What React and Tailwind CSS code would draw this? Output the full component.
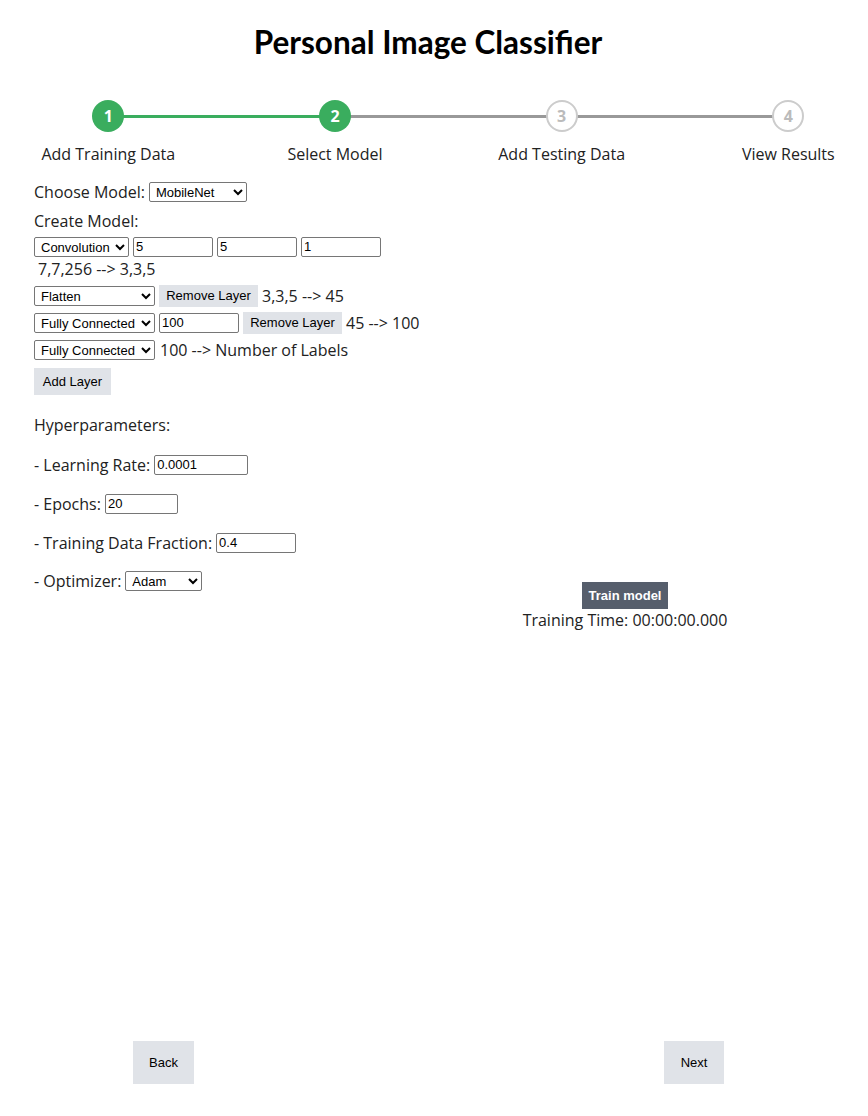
import React from "react";

const steps = [
  { n: 1, label: "Add Training Data", done: true },
  { n: 2, label: "Select Model", done: true },
  { n: 3, label: "Add Testing Data", done: false },
  { n: 4, label: "View Results", done: false },
];

const ctl = "border border-[#767676] rounded-[2px] bg-white text-[13px] text-black px-[2px]";
const body = { fontFamily: '"Open Sans", sans-serif' };
const arial = { fontFamily: '"Liberation Sans", Arial, sans-serif' };

function Stepper() {
  return (
    <div className="flex ml-[-5px] w-[907px] mt-[37px]">
      {steps.map((s, i) => (
        <div key={s.n} className="relative w-[226.67px] flex flex-col items-center">
          {i < steps.length - 1 && (
            <div
              className={
                "absolute top-[14.5px] left-1/2 w-full h-[3px] " +
                (steps[i + 1].done ? "bg-[#3aad5e]" : "bg-[#999999]")
              }
            />
          )}
          {s.done ? (
            <div className="relative z-10 w-8 h-8 rounded-full bg-[#3aad5e] text-white font-bold text-[16px] flex items-center justify-center">
              {s.n}
            </div>
          ) : (
            <div className="relative z-10 w-8 h-8 rounded-full bg-white border-2 border-[#cccccc] text-[#bbbbbb] font-bold text-[16px] flex items-center justify-center">
              {s.n}
            </div>
          )}
          <div className="mt-[11px] text-[16px] text-[#222] whitespace-nowrap leading-[22px]">{s.label}</div>
        </div>
      ))}
    </div>
  );
}

function Sel({ w, value }) {
  return (
    <select className={ctl + " h-[20px] " + w} style={arial} defaultValue={value}>
      <option>{value}</option>
    </select>
  );
}

function Inp({ w, value }) {
  return <input className={ctl + " h-[20px] " + w} style={arial} defaultValue={value} />;
}

function GrayBtn({ children, cls }) {
  return (
    <button className={"bg-[#e0e3e8] text-[13px] text-black " + cls} style={arial}>
      {children}
    </button>
  );
}

export default function App() {
  return (
    <div className="min-h-[1116px] bg-white overflow-hidden text-[#222]" style={body}>
      {/* TITLE */}
      <h1
        className="pt-[21px] pr-[12px] text-center text-[31.5px] leading-[42px] font-bold text-black"
        style={{ fontFamily: "Lato, sans-serif" }}
      >
        Personal Image Classifier
      </h1>

      <Stepper />

      <div className="px-[34px] pt-[16px] text-[16px] leading-[22px]">
        <div className="flex items-center gap-[4px]">
          <span>Choose Model:</span>
          <Sel w="w-[98px] h-[19px]" value="MobileNet" />
        </div>

        <div className="mt-[7px]">Create Model:</div>

        {/* LAYERS */}
        <div className="mt-[5px] flex gap-[4px]">
          <Sel w="w-[95px]" value="Convolution" />
          <Inp w="w-[80px]" value="5" />
          <Inp w="w-[80px]" value="5" />
          <Inp w="w-[80px]" value="1" />
        </div>
        <div className="pl-[4px] mt-[1px]">7,7,256 --&gt; 3,3,5</div>

        <div className="mt-[5px] flex items-center gap-[4px]">
          <Sel w="w-[121px]" value="Flatten" />
          <GrayBtn cls="h-[22px] w-[99px]">Remove Layer</GrayBtn>
          <span>3,3,5 --&gt; 45</span>
        </div>

        <div className="mt-[5px] flex items-center gap-[4px]">
          <Sel w="w-[121px]" value="Fully Connected" />
          <Inp w="w-[80px]" value="100" />
          <GrayBtn cls="h-[22px] w-[99px]">Remove Layer</GrayBtn>
          <span>45 --&gt; 100</span>
        </div>

        <div className="mt-[5px] flex items-center gap-[5px]">
          <Sel w="w-[121px]" value="Fully Connected" />
          <span>100 --&gt; Number of Labels</span>
        </div>

        <GrayBtn cls="mt-[7px] h-[27px] w-[77px]">Add Layer</GrayBtn>

        {/* HYPERPARAMETERS */}
        <div className="flex">
          <div className="w-[400px]">
            <div className="mt-[19px]">Hyperparameters:</div>
            <div className="mt-[18px] flex items-center gap-[4px]">
              <span>- Learning Rate:</span>
              <Inp w="w-[94px]" value="0.0001" />
            </div>
            <div className="mt-[17px] flex items-center gap-[4px]">
              <span>- Epochs:</span>
              <Inp w="w-[73px]" value="20" />
            </div>
            <div className="mt-[17px] flex items-center gap-[4px]">
              <span>- Training Data Fraction:</span>
              <Inp w="w-[80px]" value="0.4" />
            </div>
            <div className="mt-[16px] flex items-center gap-[4px]">
              <span>- Optimizer:</span>
              <Sel w="w-[77px] h-[19px]" value="Adam" />
            </div>
          </div>

          <div className="flex-1 flex flex-col items-center justify-end pr-[18px]">
            <button
              className="bg-[#565e6c] text-white font-bold text-[13px] h-[27px] w-[86px]"
              style={arial}
            >
              Train model
            </button>
            <div className="mb-[-39px] h-[22px]">Training Time: 00:00:00.000</div>
          </div>
        </div>
      </div>

      {/* NAV */}
      <div className="mt-[449px] flex justify-between pl-[133px] pr-[144px]">
        <GrayBtn cls="h-[43px] w-[61px]">Back</GrayBtn>
        <GrayBtn cls="h-[43px] w-[60px]">Next</GrayBtn>
      </div>
    </div>
  );
}
